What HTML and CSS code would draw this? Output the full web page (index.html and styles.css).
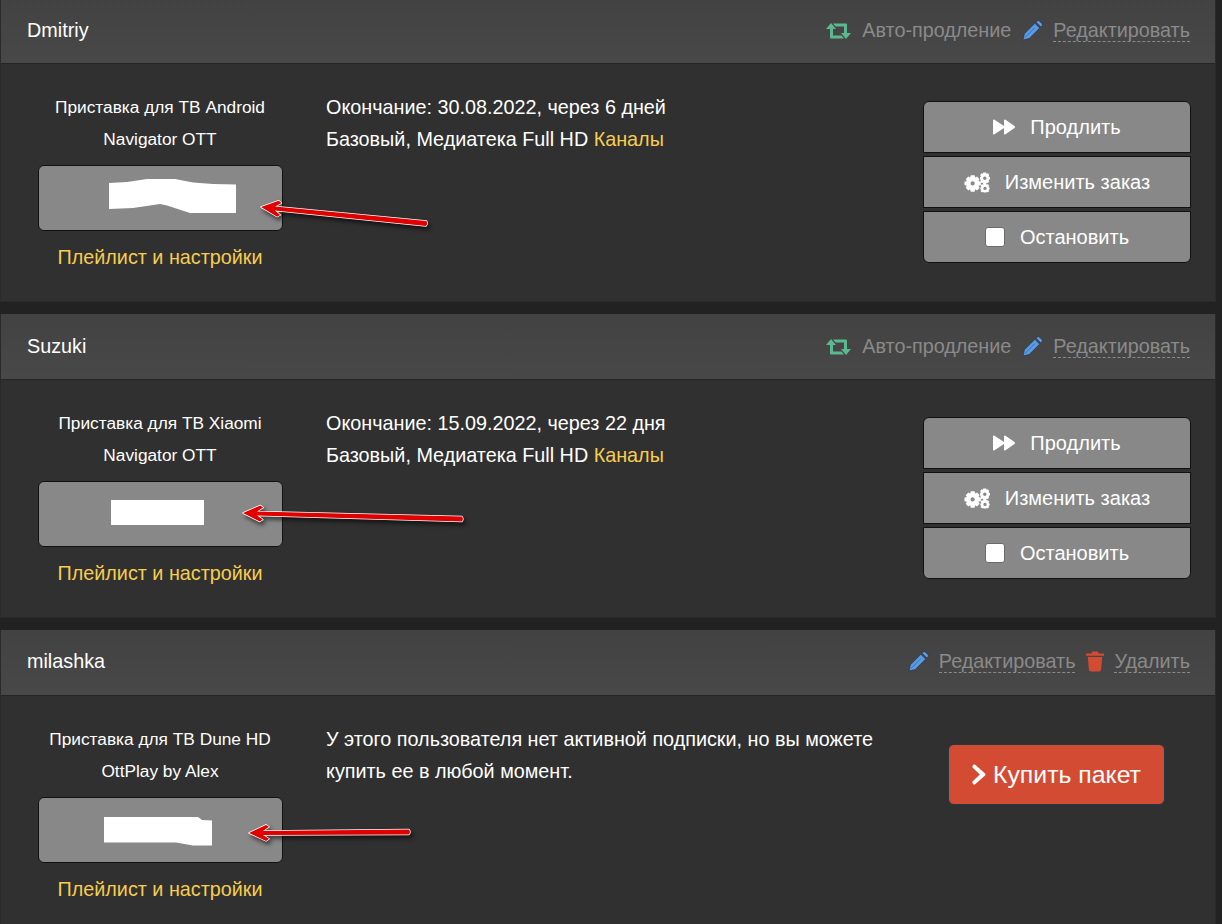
FILE: index.html
```html
<!DOCTYPE html>
<html lang="en">
<head>
  <meta charset="UTF-8">
  <title>Пользователи</title>
  <link rel="stylesheet" href="styles.css">
</head>
<body>

<svg class="icon-defs" width="0" height="0">
  <symbol id="i-retweet" viewBox="0 0 25 16">
    <path d="M5 0 L10 6 H7 V12.5 H15.5 L18 15.5 H5 Q4 15.5 4 14.5 V6 H0 Z"/>
    <path d="M20 16 L15 10 H18 V3.5 H9.5 L7 0.5 H20 Q21 0.5 21 1.5 V10 H25 Z"/>
  </symbol>
  <symbol id="i-pencil" viewBox="0 0 22 22">
    <path d="M1 21 L2.5 14.5 L13.5 3.5 L18.5 8.5 L7.5 19.5 Z"/>
    <path d="M14.7 2.3 L16 1 Q17 0.2 18.2 1 L21 3.8 Q21.8 5 21 6 L19.7 7.3 Z"/>
    <path class="pencil-line" d="M3 18.5 L13.5 8"/>
  </symbol>
  <symbol id="i-forward" viewBox="0 0 22 16">
    <path d="M0 1.5 Q0 0 1.5 0.8 L11 7 V1.5 Q11 0 12.5 0.8 L21.5 7 Q22.5 8 21.5 9 L12.5 15.2 Q11 16 11 14.5 V9 L1.5 15.2 Q0 16 0 14.5 Z"/>
  </symbol>
  <symbol id="i-cogs" viewBox="0 0 27 21">
    <path fill-rule="evenodd" d="M7 3 H11 L11.6 5.4 L13.6 4.3 L16.2 7 L15 9 L17.5 9.7 V13.3 L15 14 L16.2 16 L13.6 18.7 L11.6 17.6 L11 20 H7 L6.4 17.6 L4.4 18.7 L1.8 16 L3 14 L0.5 13.3 V9.7 L3 9 L1.8 7 L4.4 4.3 L6.4 5.4 Z M9 9.3 A2.2 2.2 0 1 0 9 13.7 A2.2 2.2 0 1 0 9 9.3 Z"/>
    <path fill-rule="evenodd" d="M20 0 H23 L23.4 1.3 L25 1 L26.2 3 L25.4 4.2 L27 5 V7 L25.4 7.8 L26.2 9 L25 11 L23.4 10.7 L23 12 H20 L19.6 10.7 L18 11 L16.8 9 L17.6 7.8 L16.6 7 V5 L17.6 4.2 L16.8 3 L18 1 L19.6 1.3 Z M21.6 4.2 A1.8 1.8 0 1 0 21.6 7.8 A1.8 1.8 0 1 0 21.6 4.2 Z"/>
    <path fill-rule="evenodd" d="M20.5 11.5 H23 L23.4 12.6 L25 12.3 L26.2 14.2 L25.4 15.2 L26.6 16 V17.6 L25.4 18.2 L26.2 19.2 L25 20.5 L23.4 20.3 L23 21 H20.5 L20 20.3 L18.4 20.5 L17.2 19.2 L18 18.2 L17 17.6 V16 L18 15.2 L17.2 14.2 L18.4 12.3 L20 12.6 Z M21.8 15 A1.7 1.7 0 1 0 21.8 18.4 A1.7 1.7 0 1 0 21.8 15 Z"/>
  </symbol>
  <symbol id="i-trash" viewBox="0 0 20 22">
    <path d="M7 0 H13 L14 2 H19 Q20 2 20 3 V4.5 H0 V3 Q0 2 1 2 H6 Z"/>
    <path d="M2 6 H18 L16.8 20 Q16.6 22 14.8 22 H5.2 Q3.4 22 3.2 20 Z"/>
  </symbol>
  <symbol id="i-chevron" viewBox="0 0 15 22">
    <path d="M3.4 0.6 L14 10 Q15 11 14 12 L3.4 21.4 Q2.4 22.2 1.4 21.4 L0.6 20 Q0 19 0.8 18.2 L8.4 11 L0.8 3.8 Q0 3 0.6 2 L1.4 0.6 Q2.4 -0.2 3.4 0.6 Z"/>
  </symbol>
</svg>

<div class="page">

  <div class="panel">
    <div class="panel-heading">
      <span class="name">Dmitriy</span>
      <div class="tools">
        <svg class="tool-icon retweet"><use href="#i-retweet"/></svg>
        <span class="tool-text">Авто-продление</span>
        <svg class="tool-icon pencil"><use href="#i-pencil"/></svg>
        <a class="tool-link">Редактировать</a>
      </div>
    </div>
    <div class="panel-body">
      <div class="device">
        <p>Приставка для ТВ Android</p>
        <p>Navigator OTT</p>
        <div class="key-box">
          <svg class="blob blob-a" width="127" height="34"><polygon points="0,4 18,3 38,0 66,0 84,3.5 104,5 127,5.5 127,34 81,34 58,26.5 51,25 24,29 0,30"/></svg>
        </div>
        <a class="yellow playlist">Плейлист и настройки</a>
      </div>
      <div class="info">
        <div>Окончание: 30.08.2022, через 6 дней</div>
        <div>Базовый, Медиатека Full HD <a class="yellow">Каналы</a></div>
      </div>
      <div class="actions">
        <div class="btn-group">
          <button class="btn"><svg class="btn-icon forward"><use href="#i-forward"/></svg>Продлить</button>
          <button class="btn"><svg class="btn-icon cogs"><use href="#i-cogs"/></svg>Изменить заказ</button>
          <button class="btn"><span class="stop-box"></span>Остановить</button>
        </div>
      </div>
      <svg class="arrow arrow-a" width="180" height="40">
        <g transform="translate(4 12) rotate(5.7)">
          <path d="M0 0 L17 -8 L20 -6 L14 -2 L166 -2.5 Q168 0 166 2.5 L14 2 L20 6 L17 8 Z"/>
        </g>
      </svg>
    </div>
  </div>

  <div class="panel">
    <div class="panel-heading">
      <span class="name">Suzuki</span>
      <div class="tools">
        <svg class="tool-icon retweet"><use href="#i-retweet"/></svg>
        <span class="tool-text">Авто-продление</span>
        <svg class="tool-icon pencil"><use href="#i-pencil"/></svg>
        <a class="tool-link">Редактировать</a>
      </div>
    </div>
    <div class="panel-body">
      <div class="device">
        <p>Приставка для ТВ Xiaomi</p>
        <p>Navigator OTT</p>
        <div class="key-box">
          <div class="blob blob-b"></div>
        </div>
        <a class="yellow playlist">Плейлист и настройки</a>
      </div>
      <div class="info">
        <div>Окончание: 15.09.2022, через 22 дня</div>
        <div>Базовый, Медиатека Full HD <a class="yellow">Каналы</a></div>
      </div>
      <div class="actions">
        <div class="btn-group">
          <button class="btn"><svg class="btn-icon forward"><use href="#i-forward"/></svg>Продлить</button>
          <button class="btn"><svg class="btn-icon cogs"><use href="#i-cogs"/></svg>Изменить заказ</button>
          <button class="btn"><span class="stop-box"></span>Остановить</button>
        </div>
      </div>
      <svg class="arrow arrow-b" width="232" height="30">
        <g transform="translate(4 10) rotate(1.6)">
          <path d="M0 0 L17 -8 L20 -6 L14 -2 L219 -2.5 Q221 0 219 2.5 L14 2 L20 6 L17 8 Z"/>
        </g>
      </svg>
    </div>
  </div>

  <div class="panel">
    <div class="panel-heading">
      <span class="name">milashka</span>
      <div class="tools">
        <svg class="tool-icon pencil"><use href="#i-pencil"/></svg>
        <a class="tool-link">Редактировать</a>
        <svg class="tool-icon trash"><use href="#i-trash"/></svg>
        <a class="tool-link">Удалить</a>
      </div>
    </div>
    <div class="panel-body">
      <div class="device">
        <p>Приставка для ТВ Dune HD</p>
        <p>OttPlay by Alex</p>
        <div class="key-box">
          <svg class="blob blob-c" width="108" height="29"><polygon points="0,0 94,0 98,3 108,3.5 108,28.5 89,28.5 72,25.5 0,25.5"/></svg>
        </div>
        <a class="yellow playlist">Плейлист и настройки</a>
      </div>
      <div class="info">
        <div>У этого пользователя нет активной подписки, но вы можете купить ее в любой момент.</div>
      </div>
      <div class="actions">
        <button class="buy"><svg class="buy-icon"><use href="#i-chevron"/></svg>Купить пакет</button>
      </div>
      <svg class="arrow arrow-c" width="172" height="30">
        <g transform="translate(4 12) rotate(-0.4)">
          <path d="M0 0 L17 -8 L20 -6 L14 -2 L160 -2.5 Q162 0 160 2.5 L14 2 L20 6 L17 8 Z"/>
        </g>
      </svg>
    </div>
  </div>

</div>

</body>
</html>
```

FILE: styles.css
```css
html, body { margin: 0; height: 924px; overflow: hidden; }
body { background: #222; color: #fff; font-family: "Liberation Sans", Arial, sans-serif; font-size: 19.8px; }
a { color: inherit; }
.icon-defs { position: absolute; }

.page { margin-top: -2px; width: 1216px; }
.panel { background: #303030; border: 1px solid #2a2a2a; border-top: 0; margin-bottom: 12px; box-sizing: border-box; height: 304px; }
.panel:last-child { margin-bottom: 0; }
.panel-heading { display: flex; justify-content: space-between; align-items: center; height: 66px; box-sizing: border-box; padding: 0 25px 0 26px; background: linear-gradient(#424242, #484848); border-bottom: 1px solid #262626; }
.panel:last-child .panel-heading { padding-bottom: 2px; }
.name { font-size: 19.8px; }
.tools { display: flex; align-items: center; color: #8a8a8a; font-size: 19.8px; }
.tool-link { border-bottom: 1px dashed #8a8a8a; line-height: 21px; }
.tool-icon { flex: none; }
.retweet { width: 25px; height: 16px; fill: #5cb88f; margin-right: 11px; }
.pencil { width: 21px; height: 21px; fill: #5a9be6; margin: 0 10px 0 11px; stroke: #2a2f3a; stroke-width: 0.7px; }
.pencil-line { fill: none; stroke: #3a6fb0; stroke-width: 1px; }
.trash { width: 18px; height: 21px; fill: #d44b33; margin: 0 10px 0 11px; }
.tools .pencil:first-child { margin-left: 0; }

.panel-body { position: relative; display: grid; grid-template-columns: 318px 1fr 268px; padding: 27px 24px 0 0; }
.device { text-align: center; font-size: 17.3px; line-height: 32px; }
.device p { margin: 0; }
.key-box { position: relative; width: 245px; height: 66px; box-sizing: border-box; margin: 10px 0 9px 37px; background: #888; border: 1px solid #111; border-radius: 6px; }
.playlist { display: block; font-size: 19.8px; line-height: 34px; }
.yellow { color: #f6cd50; }
.info { padding: 0 10px 0 7px; line-height: 32px; }

.blob { position: absolute; display: block; fill: #fff; }
.blob-a { left: 70px; top: 13px; }
.blob-b { left: 72px; top: 18px; width: 93px; height: 25px; background: #fff; }
.blob-c { left: 65px; top: 19px; }

.actions { display: flex; flex-direction: column; align-items: center; }
.btn-group { display: flex; flex-direction: column; gap: 3px; width: 100%; padding-top: 10px; }
.btn { display: flex; justify-content: center; align-items: center; gap: 15px; height: 52px; padding: 0; background: #888; color: #fff; border: 1px solid #111; border-radius: 0; font: 20px "Liberation Sans", Arial, sans-serif; }
.btn:first-child { border-radius: 6px 6px 0 0; }
.btn:last-child { border-radius: 0 0 6px 6px; }
.btn-icon { fill: #fff; flex: none; }
.forward { width: 22px; height: 16px; }
.cogs { width: 26px; height: 21px; }
.stop-box { width: 20px; height: 20px; box-sizing: border-box; background: #fff; border: 1px solid #6a6a6a; border-radius: 3px; }
.buy { display: flex; align-items: center; justify-content: center; gap: 7px; width: 217px; height: 61px; margin: 21px 1px 0 0; padding: 0; background: #d44b33; color: #fff; border: 1px solid #1f3a44; border-radius: 6px; font: 24.8px "Liberation Sans", Arial, sans-serif; }
.buy-icon { width: 14px; height: 21px; fill: #fff; flex: none; }

.arrow { position: absolute; fill: #e00000; stroke: #fff; stroke-width: 1.5px; stroke-linejoin: round; paint-order: stroke; filter: drop-shadow(2px 3px 2px rgba(0,0,0,0.6)); }
.arrow-a { left: 256px; top: 131px; }
.arrow-b { left: 238px; top: 123px; }
.arrow-c { left: 244px; top: 125px; }
```
